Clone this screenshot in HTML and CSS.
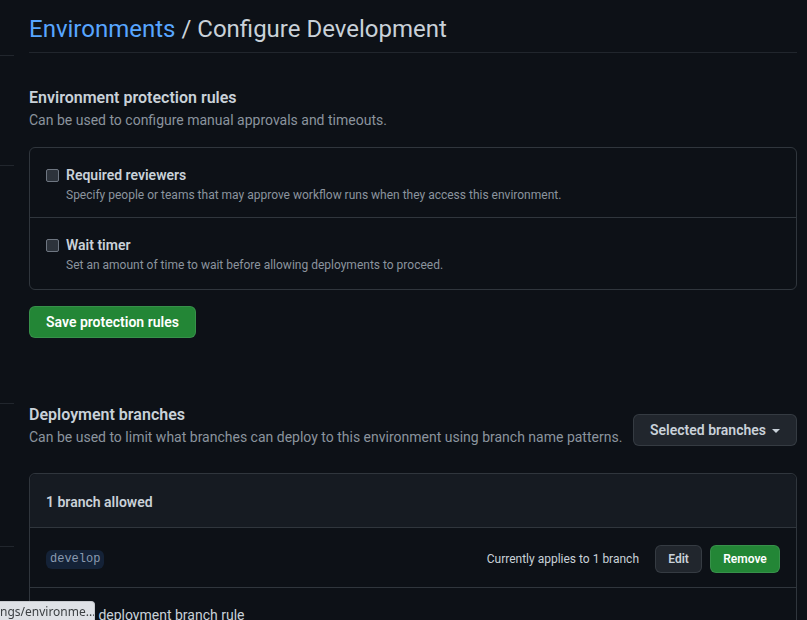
FILE: index.html
```html
<!DOCTYPE html>
<html lang="en">
<head>
<meta charset="utf-8">
<title>Configure Development</title>
<link rel="stylesheet" href="styles.css">
</head>
<body>
<div class="page">
  <aside class="sidebar">
    <div class="nav-group g1"></div>
    <div class="nav-group g2"></div>
    <div class="nav-group g3"></div>
    <div class="nav-group g4"></div>
  </aside>
  <main class="main">
    <header class="page-head">
      <h1 class="page-title"><a class="crumb" href="#">Environments</a> / Configure Development</h1>
    </header>

    <section class="section s-protection">
      <h2 class="sec-title">Environment protection rules</h2>
      <p class="sec-desc">Can be used to configure manual approvals and timeouts.</p>
      <div class="box">
        <div class="box-row">
          <label class="check-line"><span class="checkbox"></span><span class="check-title">Required reviewers</span></label>
          <p class="check-desc">Specify people or teams that may approve workflow runs when they access this environment.</p>
        </div>
        <div class="box-row">
          <label class="check-line"><span class="checkbox"></span><span class="check-title">Wait timer</span></label>
          <p class="check-desc">Set an amount of time to wait before allowing deployments to proceed.</p>
        </div>
      </div>
      <button class="btn btn-primary btn-save">Save protection rules</button>
    </section>

    <section class="section s-branches">
      <div class="sec-head">
        <div class="sec-head-text">
          <h2 class="sec-title">Deployment branches</h2>
          <p class="sec-desc">Can be used to limit what branches can deploy to this environment using branch name patterns.</p>
        </div>
        <button class="btn btn-select">Selected branches <span class="caret"></span></button>
      </div>
      <div class="box box2">
        <div class="box-head">1 branch allowed</div>
        <div class="branch-row">
          <span class="branch-name">develop</span>
          <div class="branch-actions">
            <span class="applies">Currently applies to 1 branch</span>
            <button class="btn btn-sm btn-edit">Edit</button>
            <button class="btn btn-sm btn-primary btn-remove">Remove</button>
          </div>
        </div>
        <div class="add-row">
          <svg class="plus" width="16" height="16" viewBox="0 0 16 16"><path fill="currentColor" d="M8 0a8 8 0 1 1 0 16A8 8 0 0 1 8 0ZM1.5 8a6.5 6.5 0 1 0 13 0 6.5 6.5 0 0 0-13 0Zm7.25-3.250v2.5h2.5a.75.75 0 0 1 0 1.5h-2.5v2.5a.75.75 0 0 1-1.5 0v-2.5h-2.5a.75.75 0 0 1 0-1.5h2.5v-2.5a.75.75 0 0 1 1.5 0Z"/></svg>
          <span>Add deployment branch rule</span>
        </div>
      </div>
    </section>
  </main>
</div>
<div class="status-url">ngs/environme...</div>
</body>
</html>
```

FILE: styles.css
```css
* { box-sizing: border-box; }
html, body { margin: 0; padding: 0; }
body {
  background: #0d1117;
  color: #c9d1d9;
  font-family: Roboto, "Liberation Sans", sans-serif;
  font-size: 14px;
  overflow: hidden;
  height: 620px;
}
.page { display: flex; width: 807px; }
.sidebar { width: 14px; flex: none; display: flex; flex-direction: column; }
.nav-group { border-bottom: 1px solid #21262d; }
.g1 { height: 56px; }
.g2 { height: 110px; }
.g3 { height: 238px; }
.g4 { height: 143px; }
.main { margin-left: 15px; width: 768px; flex: none; }

.page-head { padding: 11px 0 5px; border-bottom: 1px solid #21262d; }
.page-title { margin: 0; font-size: 24px; line-height: 36px; font-weight: 400; color: #c9d1d9; }
.crumb { color: #58a6ff; text-decoration: none; }

.section { display: flex; flex-direction: column; align-items: flex-start; }
.s-protection { padding-top: 33px; }
.sec-title { margin: 0; font-size: 16px; line-height: 24px; font-weight: 600; color: #c9d1d9; }
.sec-desc { margin: 0; font-size: 14px; line-height: 21px; color: #8b949e; white-space: nowrap; }

.box { width: 100%; border: 1px solid #30363d; border-radius: 6px; margin-top: 16px; }
.box-row { padding: 17px 16px 13px; }
.box-row:last-child { padding-bottom: 15px; }
.box-row + .box-row { border-top: 1px solid #30363d; }
.check-line { display: flex; align-items: center; gap: 7px; }
.checkbox { width: 13px; height: 13px; border: 1px solid #6e7681; border-radius: 2px; background: #2d333b; }
.check-title { font-size: 14px; line-height: 20px; font-weight: 600; color: #c9d1d9; }
.check-desc { margin: 1px 0 0 20px; font-size: 12px; line-height: 18px; color: #8b949e; }

.btn {
  font-family: inherit; font-weight: 600; font-size: 14px;
  border: 1px solid rgba(240,246,252,0.1); border-radius: 6px;
  background: #21262d; color: #c9d1d9; cursor: pointer;
  white-space: nowrap;
}
.btn-primary { background: #238636; color: #fff; border-color: rgba(240,246,252,0.1); }
.btn-save { margin-top: 16px; height: 32px; padding: 0 16px; }

.s-branches { padding-top: 65px; }
.sec-head { width: 100%; display: flex; justify-content: space-between; align-items: flex-end; gap: 8px; }
.btn-select { flex: none; height: 32px; width: 164px; padding: 0 16px; margin-bottom: 2px; display: flex; align-items: center; justify-content: space-between; }
.caret { width: 0; height: 0; border-left: 4px solid transparent; border-right: 4px solid transparent; border-top: 4px solid #c9d1d9; margin-top: 1px; }

.box2 { margin-top: 25px; }
.box-head { background: #161b22; padding: 18px 16px 14px; line-height: 21px; font-weight: 600; border-bottom: 1px solid #30363d; border-radius: 6px 6px 0 0; }
.branch-row { display: flex; justify-content: space-between; align-items: center; padding: 17px 16px 14px; border-bottom: 1px solid #30363d; }
.branch-name { font-family: "Liberation Mono", "DejaVu Sans Mono", monospace; font-size: 12px; line-height: 19px; padding: 0 4px; border-radius: 6px; background: #142237; color: #8b9bb0; }
.branch-actions { display: flex; align-items: center; }
.applies { font-size: 12px; color: #c9d1d9; margin-right: 16px; }
.btn-sm { height: 28px; font-size: 12px; padding: 0 12px; }
.btn-edit { width: 47px; }
.btn-remove { width: 70px; margin-left: 8px; }
.add-row { display: flex; align-items: center; gap: 8px; padding: 17px 16px 16px; line-height: 21px; color: #c9d1d9; }
.plus { color: #8b949e; }

.status-url {
  position: fixed; left: 0; bottom: 0;
  width: 95px; height: 19px;
  background: #dee1e6; color: #3c4043;
  font-family: "Noto Sans", sans-serif; font-size: 12px; line-height: 19px;
  padding-left: 0; border-top-right-radius: 4px;
  border: 1px solid #c6c9ce; border-left: none; border-bottom: none;
  white-space: nowrap; overflow: hidden;
}
```
